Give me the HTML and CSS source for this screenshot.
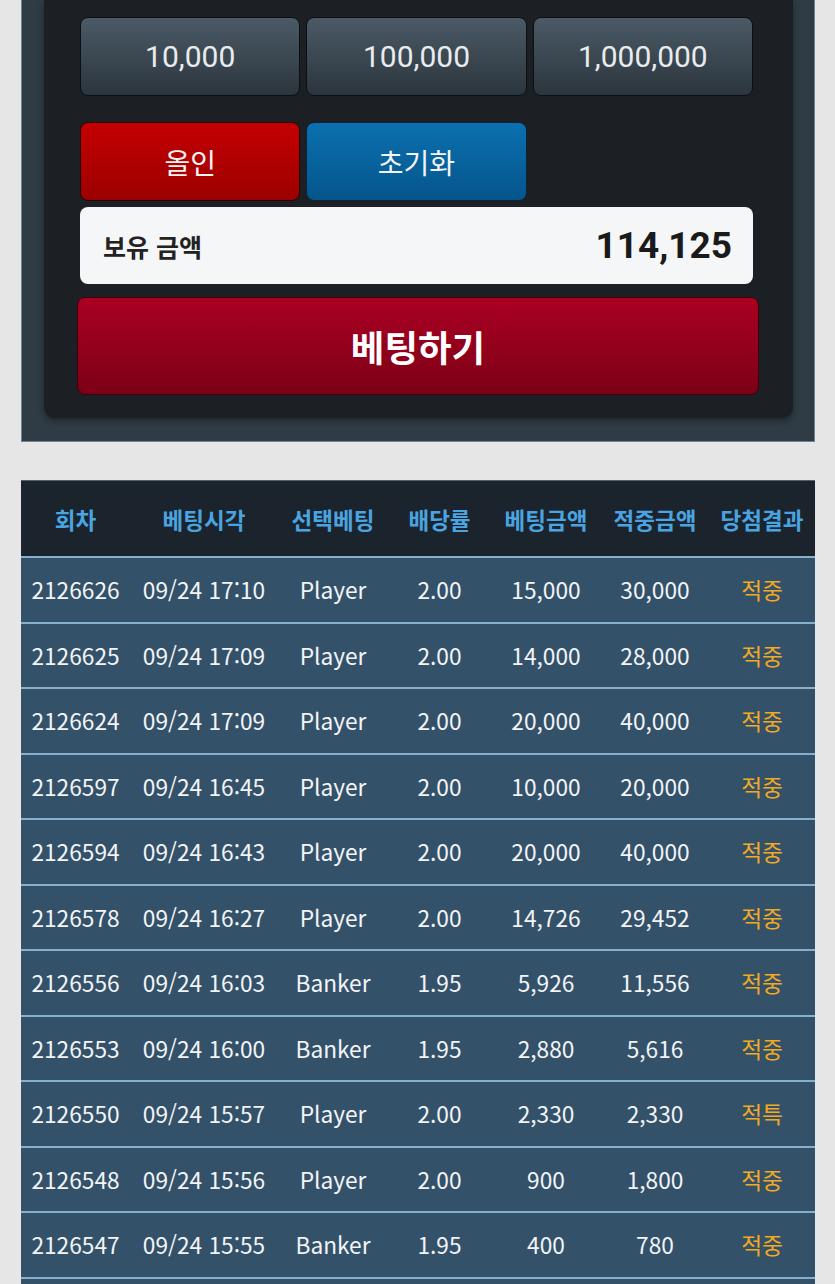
FILE: index.html
```html
<!DOCTYPE html>
<html lang="ko">
<head>
<meta charset="utf-8">
<title>베팅</title>
<link rel="stylesheet" href="styles.css">
</head>
<body>
<div class="outer">
  <div class="panel">
    <div class="chips">
      <button class="btn chip">10,000</button>
      <button class="btn chip">100,000</button>
      <button class="btn chip">1,000,000</button>
    </div>
    <div class="chips row2">
      <button class="btn allin">올인</button>
      <button class="btn reset">초기화</button>
    </div>
    <div class="balance">
      <span class="bal-label">보유 금액</span>
      <span class="bal-value">114,125</span>
    </div>
    <button class="bet">베팅하기</button>
  </div>
</div>

<table class="history">
  <colgroup>
    <col class="c1"><col class="c2"><col class="c3"><col class="c4"><col class="c5"><col class="c6"><col class="c7">
  </colgroup>
  <thead>
    <tr><th>회차</th><th>베팅시각</th><th>선택베팅</th><th>배당률</th><th>베팅금액</th><th>적중금액</th><th>당첨결과</th></tr>
  </thead>
  <tbody>
    <tr><td>2126626</td><td>09/24 17:10</td><td>Player</td><td>2.00</td><td>15,000</td><td>30,000</td><td class="res">적중</td></tr>
    <tr><td>2126625</td><td>09/24 17:09</td><td>Player</td><td>2.00</td><td>14,000</td><td>28,000</td><td class="res">적중</td></tr>
    <tr><td>2126624</td><td>09/24 17:09</td><td>Player</td><td>2.00</td><td>20,000</td><td>40,000</td><td class="res">적중</td></tr>
    <tr><td>2126597</td><td>09/24 16:45</td><td>Player</td><td>2.00</td><td>10,000</td><td>20,000</td><td class="res">적중</td></tr>
    <tr><td>2126594</td><td>09/24 16:43</td><td>Player</td><td>2.00</td><td>20,000</td><td>40,000</td><td class="res">적중</td></tr>
    <tr><td>2126578</td><td>09/24 16:27</td><td>Player</td><td>2.00</td><td>14,726</td><td>29,452</td><td class="res">적중</td></tr>
    <tr><td>2126556</td><td>09/24 16:03</td><td>Banker</td><td>1.95</td><td>5,926</td><td>11,556</td><td class="res">적중</td></tr>
    <tr><td>2126553</td><td>09/24 16:00</td><td>Banker</td><td>1.95</td><td>2,880</td><td>5,616</td><td class="res">적중</td></tr>
    <tr><td>2126550</td><td>09/24 15:57</td><td>Player</td><td>2.00</td><td>2,330</td><td>2,330</td><td class="res">적특</td></tr>
    <tr><td>2126548</td><td>09/24 15:56</td><td>Player</td><td>2.00</td><td>900</td><td>1,800</td><td class="res">적중</td></tr>
    <tr><td>2126547</td><td>09/24 15:55</td><td>Banker</td><td>1.95</td><td>400</td><td>780</td><td class="res">적중</td></tr>
    <tr class="blank"><td></td><td></td><td></td><td></td><td></td><td></td><td></td></tr>
  </tbody>
</table>
</body>
</html>
```

FILE: styles.css
```css
html, body {
  margin: 0;
  padding: 0;
  background: #e6e6e6;
}
body {
  font-family: "Noto Sans CJK KR", "Noto Sans", sans-serif;
}

.outer {
  margin: 0 20px 0 21px;
  background: #2f3b45;
  border: 1px solid #708391;
  border-top: none;
  padding: 0 21px 23px 22px;
}

.panel {
  background: #1c2024;
  border-radius: 0 0 11px 11px;
  box-shadow: 0 3px 6px rgba(0, 0, 0, 0.35);
  padding: 17px 40px 23px 36px;
}

.chips {
  display: grid;
  grid-template-columns: repeat(3, 1fr);
  gap: 6px;
}
.row2 {
  margin-top: 26px;
}

.btn {
  height: 79px;
  border-radius: 8px;
  border: 1px solid #0c0f12;
  font-family: "Roboto", "Noto Sans CJK KR", sans-serif;
  font-size: 30px;
  color: #e9ecee;
  padding: 0;
  margin: 0;
}
.chip {
  background: linear-gradient(to bottom, #4b5a66 0%, #2b353d 100%);
}
.allin, .reset {
  font-family: "Noto Sans CJK KR", sans-serif;
  font-size: 28px;
  color: #f4f4f4;
}
.allin {
  background: linear-gradient(to bottom, #c40000 0%, #9c0000 100%);
  border-color: #2a0505;
}
.reset {
  background: linear-gradient(to bottom, #0b70b0 0%, #05558b 100%);
  border-color: #0a2438;
}

.balance {
  margin-top: 6px;
  height: 77px;
  box-sizing: border-box;
  background: #f5f6f8;
  border-radius: 8px;
  display: flex;
  align-items: center;
  justify-content: space-between;
  padding: 0 21px 0 23px;
}
.bal-label {
  font-family: "Noto Sans CJK KR", sans-serif;
  font-weight: 700;
  font-size: 25px;
  color: #222;
}
.bal-value {
  font-family: "Roboto", sans-serif;
  font-weight: 700;
  font-size: 37px;
  color: #1a1a1a;
}

.bet {
  display: block;
  margin: 13px -6px 0 -3px;
  width: calc(100% + 9px);
  height: 98px;
  border-radius: 8px;
  border: 1px solid #3e0010;
  background: linear-gradient(to bottom, #ab0022 0%, #7c0016 100%);
  color: #ffffff;
  font-family: "Noto Sans CJK KR", sans-serif;
  font-weight: 700;
  font-size: 36.5px;
  padding: 0;
}

.history {
  margin: 38px 0 0 21px;
  width: 794px;
  table-layout: fixed;
  border-collapse: collapse;
  font-family: "Noto Sans CJK KR", "Noto Sans", sans-serif;
}
.c1 { width: 109px; }
.c2 { width: 148px; }
.c3 { width: 110px; }
.c4 { width: 103px; }
.c5 { width: 110px; }
.c6 { width: 108px; }
.c7 { width: 106px; }

.history th {
  background: #1b242c;
  color: #4ba4e2;
  font-weight: 700;
  font-size: 22.5px;
  height: 75px;
  padding: 0;
  border-top: 1px solid #55616b;
  border-bottom: 2px solid #88afcc;
  white-space: nowrap;
}
.history td {
  background: #34516a;
  color: #f2f4f6;
  font-size: 22.7px;
  text-align: center;
  height: 63.5px;
  padding: 0;
  border-bottom: 2px solid #88afcc;
  white-space: nowrap;
}
.history td.res {
  color: #f2aa22;
}
.history tr.blank td {
  height: 40px;
  border-bottom: none;
}
```
